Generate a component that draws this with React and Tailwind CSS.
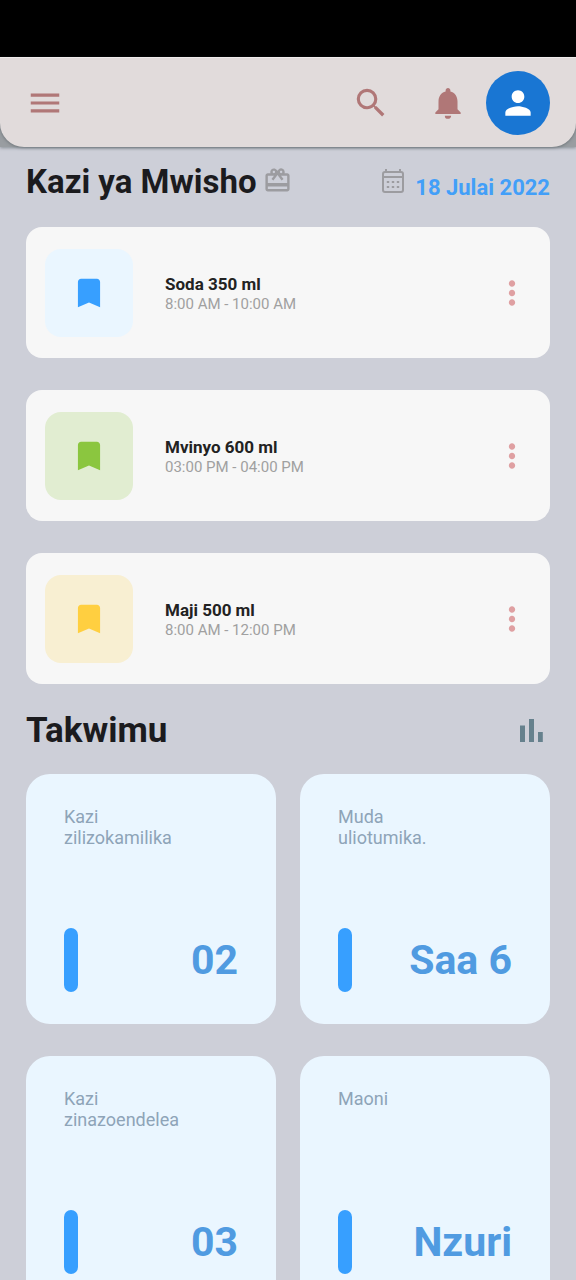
import React from 'react';
import {
  MdMenu,
  MdSearch,
  MdNotifications,
  MdPerson,
  MdBookmark,
  MdMoreVert,
  MdOutlineCardGiftcard,
} from 'react-icons/md';

const tasks = [
  { title: 'Soda 350 ml', time: '8:00 AM - 10:00 AM', tile: 'bg-[#eaf6ff]', icon: 'text-[#379fff]' },
  { title: 'Mvinyo 600 ml', time: '03:00 PM - 04:00 PM', tile: 'bg-[#e1edd1]', icon: 'text-[#8bc63f]' },
  { title: 'Maji 500 ml', time: '8:00 AM - 12:00 PM', tile: 'bg-[#f8efd2]', icon: 'text-[#ffcf40]' },
];

const stats = [
  { label: 'Kazi zilizokamilika', value: '02' },
  { label: 'Muda uliotumika.', value: 'Saa 6' },
  { label: 'Kazi zinazoendelea', value: '03' },
  { label: 'Maoni', value: 'Nzuri' },
];

function CalendarIcon() {
  return (
    <svg width="24" height="26" viewBox="0 0 24 26" fill="none" stroke="currentColor" strokeWidth="2" aria-hidden="true">
      <rect x="2" y="4" width="20" height="20" rx="2" />
      <path d="M2 9H22M5 1V4.5M19 1V4.5" />
      <path d="M5.8 14H8.2M10.8 14H13.2M15.8 14H18.2M5.8 19H8.2M10.8 19H13.2M15.8 19H18.2" strokeWidth="2.2" />
    </svg>
  );
}

function BarsIcon() {
  return (
    <svg width="23" height="24" viewBox="0 0 23 24" fill="currentColor" aria-hidden="true">
      <rect x="0" y="6.5" width="5" height="16.5" />
      <rect x="9" y="0" width="5" height="23" />
      <rect x="18" y="13" width="4.8" height="10" />
    </svg>
  );
}

function Header() {
  return (
    <header className="bg-[#999da1] shadow-[0_1px_3px_rgba(70,80,85,0.5)]">
      <div className="h-[57px] bg-black" />
      <div className="flex h-[90px] items-center rounded-b-3xl border-t border-[#efebeb] bg-[#e1dbdb] px-[26px] text-[#b07777] shadow-[0_1px_3px_rgba(70,80,85,0.5)]">
        <button type="button" aria-label="Menyu">
          <MdMenu size={38} />
        </button>
        <button type="button" aria-label="Tafuta" className="ml-auto">
          <MdSearch size={38} />
        </button>
        <button type="button" aria-label="Arifa" className="ml-[39px]">
          <MdNotifications size={38} />
        </button>
        <button
          type="button"
          aria-label="Wasifu"
          className="ml-[19px] flex size-16 items-center justify-center rounded-full bg-[#1976d3] text-white"
        >
          <MdPerson size={38} />
        </button>
      </div>
    </header>
  );
}

function TaskCard({ task }) {
  return (
    <li className="flex h-[131px] items-center rounded-2xl bg-[#f7f7f7] px-[19px]">
      <div className={`flex size-[88px] items-center justify-center rounded-2xl ${task.tile}`}>
        <MdBookmark size={38} className={task.icon} />
      </div>
      <div className="ml-8 flex-1 pt-0.5">
        <h2 className="text-[17px] leading-5 font-bold text-[#222]">{task.title}</h2>
        <p className="text-[15px] leading-5 text-[#a0a0a0]">{task.time}</p>
      </div>
      <button type="button" aria-label={`Chaguo za ${task.title}`} className="text-[#dfa0a2]">
        <MdMoreVert size={38} />
      </button>
    </li>
  );
}

function StatCard({ stat }) {
  return (
    <li className="flex h-[250px] flex-col justify-between rounded-3xl bg-[#eaf6ff] px-[38px] py-8">
      <p className="w-[120px] text-[18px] leading-[21px] text-[#8ea4b8]">{stat.label}</p>
      <div className="flex items-center justify-between">
        <div className="h-16 w-[14px] rounded-full bg-[#379fff]" />
        <p className="text-[41px] leading-none font-bold text-[#509be1]">{stat.value}</p>
      </div>
    </li>
  );
}

export default function App() {
  return (
    <div className="h-screen overflow-hidden bg-[#cdcfd8] font-['Roboto',sans-serif]">
      <Header />
      <main className="px-[26px]">
        <div className="flex h-20 items-start pt-[15px]">
          <h1 className="text-[33px] leading-10 font-bold text-[#1b1b1e]">Kazi ya Mwisho</h1>
          <MdOutlineCardGiftcard size={29} className="mt-1 ml-1.5 text-[#9c9ca0]" />
          <div className="ml-auto flex gap-2.5 pt-1.5 text-[#9c9ca0]">
            <CalendarIcon />
            <time dateTime="2022-07-18" className="pt-2 text-[22px] leading-6 font-bold text-[#429ff8]">
              18 Julai 2022
            </time>
          </div>
        </div>
        <ul className="flex flex-col gap-8">
          {tasks.map((task) => (
            <TaskCard key={task.title} task={task} />
          ))}
        </ul>
        <div className="flex h-[90px] items-center justify-between pt-1 pr-[7px]">
          <h1 className="text-[35px] leading-10 font-bold text-[#1b1b1e]">Takwimu</h1>
          <span className="text-[#66818d]">
            <BarsIcon />
          </span>
        </div>
        <ul className="grid grid-cols-2 gap-x-6 gap-y-8">
          {stats.map((stat) => (
            <StatCard key={stat.label} stat={stat} />
          ))}
        </ul>
      </main>
    </div>
  );
}
